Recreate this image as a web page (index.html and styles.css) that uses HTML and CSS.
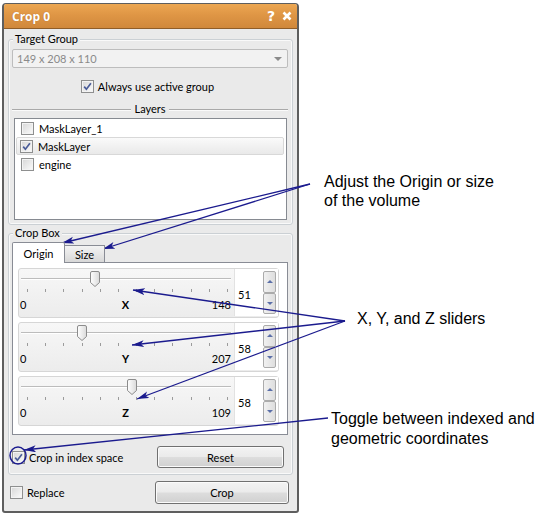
FILE: index.html
```html
<!DOCTYPE html>
<html>
<head>
<meta charset="utf-8">
<title>Crop 0</title>
<link rel="stylesheet" href="styles.css">
</head>
<body>
<div class="stage">
  <div class="window">
    <div class="titlebar">
      <span class="title">Crop 0</span>
      <span class="help">?</span>
      <svg class="close" width="10" height="10" viewBox="0 0 10 10"><path d="M1.5 1.5 L8.5 8.5 M8.5 1.5 L1.5 8.5"/></svg>
    </div>
    <div class="body">
      <div class="group target">
        <div class="legend">Target Group</div>
        <div class="combo"><span>149 x 208 x 110</span><svg width="8" height="4" viewBox="0 0 8 4"><path d="M0 0 H8 L4 4 Z"/></svg></div>
        <div class="check-row centered">
          <span class="cb"><svg width="11" height="11" viewBox="0 0 11 11"><path d="M2.2 5.6 L4.4 8.2 L8.9 2.2"/></svg></span>
          <span>Always use active group</span>
        </div>
        <div class="sep"><span>Layers</span></div>
        <div class="list">
          <div class="item"><span class="cb"></span><span>MaskLayer_1</span></div>
          <div class="item sel"><span class="cb"><svg width="11" height="11" viewBox="0 0 11 11"><path d="M2.2 5.6 L4.4 8.2 L8.9 2.2"/></svg></span><span>MaskLayer</span></div>
          <div class="item"><span class="cb"></span><span>engine</span></div>
        </div>
      </div>

      <div class="group cropbox">
        <div class="legend">Crop Box</div>
        <div class="tabs">
          <div class="tab active">Origin</div>
          <div class="tab">Size</div>
        </div>
        <div class="pane">
          <div class="spanel">
            <div class="slider">
              <div class="track"><span class="thumb" style="left:71px"><svg width="10" height="16" viewBox="0 0 10 16"><defs><linearGradient id="tg1" x1="0" y1="0" x2="1" y2="0"><stop offset="0" stop-color="#ffffff"/><stop offset="1" stop-color="#dadada"/></linearGradient></defs><path d="M0.5 2 Q0.5 0.5 2 0.5 H8 Q9.5 0.5 9.5 2 V11.5 L5 15.5 L0.5 11.5 Z" fill="url(#tg1)" stroke="#8c8c8c"/></svg></span></div>
              <div class="ticks"><i></i><i></i><i></i><i></i><i></i><i></i><i></i><i></i><i></i><i></i><i></i><i></i></div>
              <div class="labels"><span class="min">0</span><b>X</b><span class="max">148</span></div>
            </div>
            <div class="spin"><span class="val">51</span><div class="btns"><span class="sb up"></span><span class="sb dn"></span></div></div>
          </div>
          <div class="spanel">
            <div class="slider">
              <div class="track"><span class="thumb" style="left:58px"><svg width="10" height="16" viewBox="0 0 10 16"><path d="M0.5 2 Q0.5 0.5 2 0.5 H8 Q9.5 0.5 9.5 2 V11.5 L5 15.5 L0.5 11.5 Z" fill="url(#tg1)" stroke="#8c8c8c"/></svg></span></div>
              <div class="ticks"><i></i><i></i><i></i><i></i><i></i><i></i><i></i><i></i><i></i><i></i><i></i><i></i></div>
              <div class="labels"><span class="min">0</span><b>Y</b><span class="max">207</span></div>
            </div>
            <div class="spin"><span class="val">58</span><div class="btns"><span class="sb up"></span><span class="sb dn"></span></div></div>
          </div>
          <div class="spanel">
            <div class="slider">
              <div class="track"><span class="thumb" style="left:108px"><svg width="10" height="16" viewBox="0 0 10 16"><path d="M0.5 2 Q0.5 0.5 2 0.5 H8 Q9.5 0.5 9.5 2 V11.5 L5 15.5 L0.5 11.5 Z" fill="url(#tg1)" stroke="#8c8c8c"/></svg></span></div>
              <div class="ticks"><i></i><i></i><i></i><i></i><i></i><i></i><i></i><i></i><i></i><i></i><i></i><i></i></div>
              <div class="labels"><span class="min">0</span><b>Z</b><span class="max">109</span></div>
            </div>
            <div class="spin"><span class="val">58</span><div class="btns"><span class="sb up"></span><span class="sb dn"></span></div></div>
          </div>
        </div>
        <div class="action-row">
          <div class="check-row">
            <span class="cb"><svg width="11" height="11" viewBox="0 0 11 11"><path d="M2.2 5.6 L4.4 8.2 L8.9 2.2"/></svg></span>
            <span>Crop in index space</span>
          </div>
          <button class="btn reset">Reset</button>
        </div>
      </div>

      <div class="bottom-row">
        <div class="check-row">
          <span class="cb"></span>
          <span>Replace</span>
        </div>
        <button class="btn crop">Crop</button>
      </div>
    </div>
  </div>

  <div class="note note-origin">Adjust the Origin or size<br>of the volume</div>
  <div class="note note-sliders">X, Y, and Z sliders</div>
  <div class="note note-toggle">Toggle between indexed and<br>geometric coordinates</div>

  <svg class="overlay" width="536" height="518" viewBox="0 0 536 518">
    <defs>
      <marker id="ah" markerWidth="13" markerHeight="8" refX="12" refY="3.5" orient="auto" markerUnits="userSpaceOnUse">
        <path d="M0 0 L12 3.5 L0 7 L3 3.5 Z" fill="#1b1b8e"/>
      </marker>
    </defs>
    <g stroke="#1b1b8e" stroke-width="1.3" fill="none">
      <line x1="310" y1="184" x2="62" y2="243" marker-end="url(#ah)"/>
      <line x1="310" y1="184" x2="103" y2="249" marker-end="url(#ah)"/>
      <line x1="345" y1="321" x2="133" y2="290" marker-end="url(#ah)"/>
      <line x1="345" y1="321" x2="132" y2="345" marker-end="url(#ah)"/>
      <line x1="345" y1="321" x2="137" y2="399" marker-end="url(#ah)"/>
      <line x1="328" y1="418" x2="24" y2="450" marker-end="url(#ah)"/>
      <ellipse cx="18" cy="455.5" rx="8" ry="8.5" stroke-width="1.5"/>
    </g>
  </svg>
</div>
</body>
</html>
```

FILE: styles.css
```css
* { box-sizing: border-box; }
html, body { margin: 0; padding: 0; background: #ffffff; }
body {
  font-family: Lato, "Open Sans", sans-serif;
  font-size: 11px;
  color: #000;
}
.stage { position: relative; width: 536px; height: 518px; overflow: hidden; }

.window {
  margin: 3px 0 0 2px;
  width: 297px;
  height: 510px;
  border: 2px solid #5e5e5e;
  border-top-width: 1px;
  border-radius: 4px 4px 3px 3px;
  background: #eaeaea;
  display: flex;
  flex-direction: column;
  overflow: hidden;
}

.titlebar {
  height: 25px;
  flex: none;
  display: flex;
  align-items: center;
  padding: 0 5px 0 8px;
  background: linear-gradient(#eca752, #df9645 45%, #d0883b);
  border-bottom: 1px solid #8f5d28;
  color: #fff;
}
.title {
  flex: 1;
  font-family: "Open Sans", sans-serif;
  font-weight: bold;
  font-size: 12px;
  text-shadow: 0 0 1px rgba(110, 60, 10, .45);
}
.help {
  font-family: "DejaVu Sans", sans-serif;
  font-weight: bold;
  font-size: 14px;
  margin-right: 7px;
  line-height: 14px;
}
.close path { stroke: #fff; stroke-width: 2.6; fill: none; }

.body { flex: 1; display: flex; flex-direction: column; }

.group {
  margin: 10px 4px 0 4px;
  border: 1px solid #cbd0d4;
  border-radius: 3px;
  box-shadow: inset 0 0 0 1px #f9f9f9;
  padding: 0 4px 4px 3px;
}
.group.cropbox { margin-top: 8px; padding-bottom: 6px; }
.legend {
  display: table;
  margin: -8px 0 0 1px;
  padding: 0 2px;
  line-height: 14px;
  background: #eaeaea;
}

.combo {
  margin-top: 3px;
  height: 19px;
  border: 1px solid #bdbdbd;
  border-radius: 2px;
  background: #f2f2f2;
  display: flex;
  align-items: center;
  justify-content: space-between;
  padding: 0 5px 0 4px;
  color: #8a8a8a;
}
.combo svg path { fill: #8a8a8a; }

.check-row { display: flex; align-items: center; gap: 4px; height: 18px; }
.check-row.centered { justify-content: center; margin-top: 9px; padding-right: 5px; }

.cb {
  width: 13px;
  height: 13px;
  flex: none;
  border: 1px solid #8e8f8f;
  background: linear-gradient(135deg, #d6d6d6, #f6f6f6 85%);
  box-shadow: inset 0 0 0 1px #f3f3f3;
  display: flex;
  align-items: center;
  justify-content: center;
}
.cb svg path { stroke: #4a5c98; stroke-width: 1.7; fill: none; }

.sep {
  margin-top: 7px;
  height: 14px;
  display: flex;
  align-items: center;
  gap: 3px;
  line-height: 14px;
}
.sep::before, .sep::after {
  content: "";
  flex: 1;
  height: 1px;
  background: #a9a9a9;
  box-shadow: 0 1px 0 #fafafa;
}

.list {
  margin: 2px 1px 0 2px;
  height: 102px;
  border: 1px solid #868a91;
  background: #fff;
}
.item {
  height: 18px;
  display: flex;
  align-items: center;
  gap: 5px;
  padding-left: 5px;
  margin: 0 2px 0 1px;
}
.item.sel {
  padding-left: 3px;
  border: 1px solid #d8d8d8;
  border-radius: 2px;
  background: linear-gradient(#fafafa, #e9e9e9);
}

.tabs {
  margin-top: 2px;
  height: 21px;
  margin-bottom: -1px;
  display: flex;
  align-items: flex-start;
  position: relative;
  z-index: 1;
}
.tab {
  border: 1px solid #898c95;
  border-bottom: none;
  display: flex;
  align-items: center;
  justify-content: center;
}
.tab.active {
  width: 53px;
  height: 21px;
  background: #fff;
  border-radius: 2px 2px 0 0;
}
.tab:not(.active) {
  width: 41px;
  height: 17px;
  margin-top: 3px;
  margin-left: -1px;
  background: linear-gradient(#f3f3f3, #e6e6e6 50%, #d8d8d8);
  padding-top: 1px;
}

.pane {
  border: 1px solid #898c95;
  background: #fff;
  padding: 5px 8px 8px 5px;
  display: flex;
  flex-direction: column;
  gap: 4px;
}
.spanel {
  height: 50px;
  border: 1px solid #d6d6d6;
  border-radius: 3px;
  background: linear-gradient(#f7f7f7, #ececec);
  display: flex;
}
.slider { width: 215px; flex: none; padding-top: 2px; }
.track { position: relative; height: 16px; }
.track::before {
  content: "";
  position: absolute;
  left: 2px;
  width: 210px;
  top: 7px;
  height: 1px;
  background: #bcbcbc;
  box-shadow: 0 1px 0 #fff;
}
.thumb { position: absolute; top: 0; width: 10px; height: 16px; }
.thumb svg { display: block; }
.ticks {
  margin: 2px 0 0 8px;
  width: 201px;
  height: 4px;
  display: flex;
  justify-content: space-between;
}
.ticks i { width: 1px; height: 3px; background: #9b9b9b; }
.labels {
  margin: 5px 0 0 1px;
  width: 211px;
  line-height: 14px;
  display: grid;
  grid-template-columns: 1fr auto 1fr;
}
.labels .max { text-align: right; }
.labels b { font-weight: bold; }

.spin {
  width: 44px;
  flex: none;
  margin-bottom: 1px;
  background: #fff;
  border-left: 1px solid #e2e2e2;
  display: flex;
  align-items: stretch;
}
.val { flex: 1; display: flex; align-items: center; padding: 4px 0 0 3px; }
.btns {
  width: 13px;
  margin: 2px 2px 2px 0;
  display: flex;
  flex-direction: column;
  gap: 0;
}
.sb {
  flex: 1;
  border: 1px solid #ababab;
  border-radius: 2px;
  background: linear-gradient(90deg, #f1f1f1, #dedede);
  display: flex;
  align-items: center;
  justify-content: center;
}
.sb::after {
  content: "";
  width: 0;
  height: 0;
  border-left: 3px solid transparent;
  border-right: 3px solid transparent;
}
.sb.up::after { border-bottom: 3px solid #5b6fa8; }
.sb.dn::after { border-top: 3px solid #5b6fa8; }

.action-row {
  margin-top: 11px;
  height: 22px;
  display: flex;
  align-items: center;
  justify-content: space-between;
  padding-right: 4px;
}

.btn {
  font: inherit;
  color: #000;
  border: 1px solid #707070;
  border-radius: 3px;
  background: linear-gradient(#f3f3f3, #ebebeb 48%, #dddddd 52%, #d0d0d0);
  box-shadow: inset 0 0 0 1px #fbfbfb;
  padding: 0;
}
.btn.reset { width: 127px; height: 22px; }
.btn.crop { width: 134px; height: 23px; }

.bottom-row {
  margin-top: 6px;
  height: 23px;
  display: flex;
  align-items: center;
  justify-content: space-between;
  padding: 0 8px 0 6px;
}

.note {
  position: absolute;
  font-family: "Liberation Sans", Arial, sans-serif;
  font-size: 16px;
  line-height: 19px;
  color: #000;
}
.note-origin { left: 324px; top: 172px; }
.note-sliders { left: 357px; top: 309px; }
.note-toggle { left: 331px; top: 409px; line-height: 19.5px; }

.overlay { position: absolute; left: 0; top: 0; pointer-events: none; }
```
